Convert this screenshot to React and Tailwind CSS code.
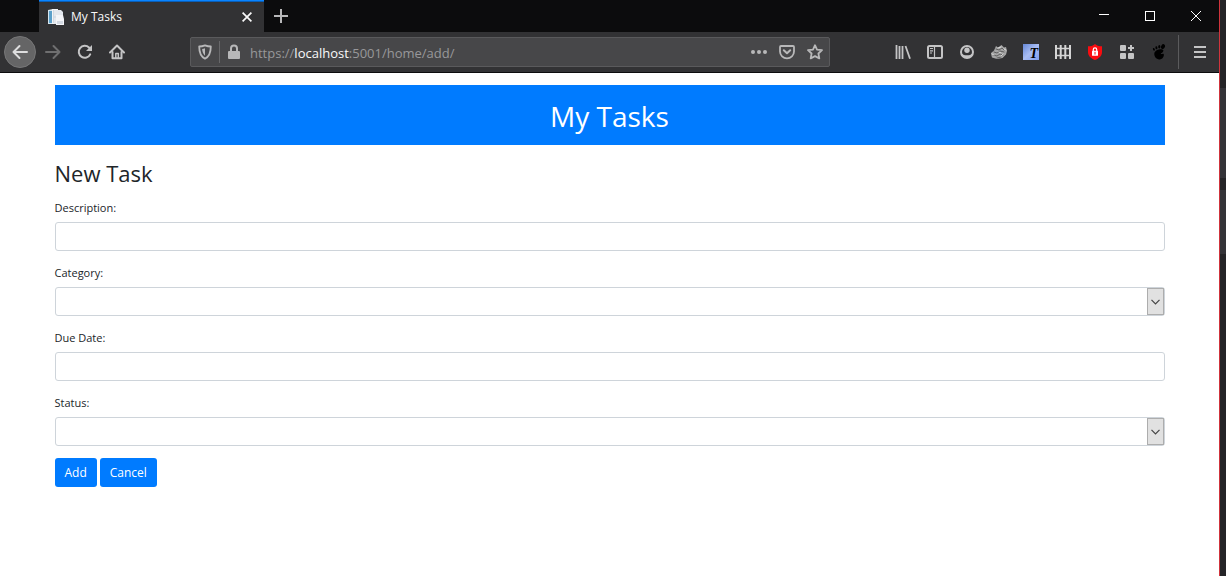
import React from "react";

function Svg({ children, size = 16, className = "" }) {
  return (
    <svg
      viewBox="0 0 16 16"
      width={size}
      height={size}
      fill="none"
      stroke="currentColor"
      strokeWidth="2"
      strokeLinecap="round"
      strokeLinejoin="round"
      className={className}
      aria-hidden="true"
    >
      {children}
    </svg>
  );
}

function ToolButton({ label, className = "w-8 text-[#c4c4c5]", children }) {
  return (
    <button
      type="button"
      aria-label={label}
      className={`flex h-8 shrink-0 items-center justify-center ${className}`}
    >
      {children}
    </button>
  );
}

function PagesIcon() {
  return (
    <svg viewBox="0 0 16 16" width="16" height="16" aria-hidden="true">
      <path d="M0 1l5-1v15H0z" fill="#d6e6f0" />
      <path d="M1 2h3v12H1z" fill="#5b9fc9" />
      <path d="M4 0h6v15H4z" fill="#f3f5f7" />
      <path d="M6 1h7l2 2v12H6z" fill="#e4e8ee" />
      <path d="M5.500 1v13M6 8h3" stroke="#c3ccd6" strokeWidth=".7" />
      <path d="M8 6h7l1 4v6H8z" fill="#f4f5f8" />
      <path d="M9 12h6v3H9z" fill="#d3d9e2" />
    </svg>
  );
}

function TitleBar() {
  return (
    <div className="flex h-8 bg-[#0c0c0d]">
      <div className="ml-[39px] flex w-[225px] items-center border-t border-[#0a84ff] bg-[#323234] pr-[7px] pl-[9px] text-[#f9f9fa] shadow-[inset_0_1px_0_#0a5fb8]">
        <PagesIcon />
        <span className="ml-[7px] flex-1 text-[12px] leading-4">My Tasks</span>
        <button type="button" aria-label="Close tab" className="flex size-5 items-center justify-center">
          <svg viewBox="0 0 10 10" width="10" height="10" fill="none" stroke="currentColor" strokeWidth="1.7" aria-hidden="true">
            <path d="M.6.6l8.8 8.8M9.4.6L.6 9.4" />
          </svg>
        </button>
      </div>
      <button type="button" aria-label="New tab" className="flex w-[34px] items-center justify-center text-[#b8b8b9]">
        <svg viewBox="0 0 14 14" width="14" height="14" fill="none" stroke="currentColor" strokeWidth="2" aria-hidden="true">
          <path d="M7 0v14M0 7h14" />
        </svg>
      </button>
      <div className="flex-1" />
      <button type="button" aria-label="Minimize" className="flex w-[46px] items-center justify-center text-white">
        <svg viewBox="0 0 10 10" width="10" height="10" stroke="currentColor" shapeRendering="crispEdges" aria-hidden="true">
          <path d="M0 3.500h10" />
        </svg>
      </button>
      <button type="button" aria-label="Maximize" className="flex w-[46px] items-center justify-center text-white">
        <svg viewBox="0 0 10 10" width="10" height="10" fill="none" stroke="currentColor" shapeRendering="crispEdges" aria-hidden="true">
          <path d="M.5.5h9v9h-9z" />
        </svg>
      </button>
      <button type="button" aria-label="Close window" className="flex w-[46px] items-center justify-center text-white">
        <svg viewBox="0 0 10 10" width="10" height="10" fill="none" stroke="currentColor" aria-hidden="true">
          <path d="M0 0l10 10M10 0L0 10" />
        </svg>
      </button>
    </div>
  );
}

function AddressBar() {
  return (
    <div className="flex h-[30px] flex-1 items-center rounded-xs border border-[#5a5a5c] bg-[#474749] text-[#b8b8b9]">
      <ToolButton label="Tracking protection" className="w-7">
        <Svg>
          <path d="M8 1.3c2 .8 4 1.200 5.800 1.200 0 5.500-1.400 10-5.800 12.200C3.600 12.500 2.200 8 2.200 2.500 4 2.500 6 2.100 8 1.300z" strokeWidth="1.800" />
          <path d="M8 4.300v7.400C6.200 10.200 5.300 7.800 5.100 5.100 6.100 5 7.100 4.700 8 4.300z" fill="currentColor" stroke="none" />
        </Svg>
      </ToolButton>
      <div className="h-[22px] w-px bg-[#68686a]" />
      <ToolButton label="Site information" className="w-7">
        <Svg>
          <path d="M5 8V4.500a3 3 0 0 1 6 0V8" />
          <rect x="2" y="7" width="12" height="8" rx="1" fill="currentColor" stroke="none" />
        </Svg>
      </ToolButton>
      <div className="flex-1 pt-0.5 pl-0.5 text-[13px] leading-5 text-[#98989a]">
        https://<span className="text-[#f9f9fa]">localhost</span>:5001/home/add/
      </div>
      <ToolButton label="Page actions" className="w-7">
        <Svg>
          <g fill="currentColor" stroke="none">
            <circle cx="2" cy="8" r="2" />
            <circle cx="8" cy="8" r="2" />
            <circle cx="14" cy="8" r="2" />
          </g>
        </Svg>
      </ToolButton>
      <ToolButton label="Save to Pocket" className="w-7">
        <Svg>
          <path d="M2 2h12a1 1 0 0 1 1 1v4.500a7 6.800 0 0 1-14 0V3a1 1 0 0 1 1-1z" strokeWidth="1.800" />
          <path d="M4.800 6.300L8 9.300l3.200-3" />
        </Svg>
      </ToolButton>
      <ToolButton label="Bookmark" className="w-7">
        <Svg>
          <path d="M8 1.200l2 4.400 5 .6-3.600 3.300.9 4.900L8 12.100l-4.300 2.300.9-4.900L1 6.200l5-.6z" strokeWidth="1.800" />
        </Svg>
      </ToolButton>
    </div>
  );
}

function Toolbar() {
  return (
    <div className="flex h-[41px] items-center border-b border-[#0c0c0d] bg-[#323234] pl-1">
      <ToolButton label="Back" className="w-8 rounded-full border border-[#777778] bg-[#656566] text-[#dededf]">
        <Svg>
          <path d="M15 8H1.500M7.500 2l-6 6 6 6" />
        </Svg>
      </ToolButton>
      <ToolButton label="Forward" className="w-[33px] text-[#6f6f70]">
        <Svg>
          <path d="M1 8h13.500M8.500 2l6 6-6 6" />
        </Svg>
      </ToolButton>
      <ToolButton label="Reload">
        <Svg>
          <path d="M13.200 10.300A6 6 0 1 1 12 3.500L13.500 5" />
          <path d="M15 1v6H9z" fill="currentColor" stroke="none" />
        </Svg>
      </ToolButton>
      <ToolButton label="Home">
        <Svg>
          <path d="M1 8.500L8 1.500l7 7" />
          <path d="M3.500 8v6.200h9V8" />
          <path d="M6.800 14V9.500h2.500V14" strokeWidth="1.500" />
        </Svg>
      </ToolButton>
      <div className="w-[57px]" />
      <AddressBar />
      <div className="w-[57px]" />
      <ToolButton label="Library">
        <Svg>
          <path d="M1.500 1v14M4.500 2v13M7.500 2v13M10.500 2l4.500 12.700" strokeWidth="1.800" strokeLinecap="butt" />
        </Svg>
      </ToolButton>
      <ToolButton label="Sidebars">
        <Svg>
          <rect x="1" y="2" width="14" height="12" rx="1.500" />
          <path d="M7.500 2v12M3 4.500h3M3 6.800h3M3 9h2" strokeWidth="1.200" strokeLinecap="butt" />
        </Svg>
      </ToolButton>
      <ToolButton label="Account">
        <Svg>
          <circle cx="8" cy="8" r="6" />
          <circle cx="8" cy="6.200" r="2.700" fill="currentColor" stroke="none" />
          <path d="M2.500 9.500c1.700 1.300 3 1.800 5.500 1.800s3.800-.5 5.500-1.800L12 13H4z" fill="currentColor" stroke="none" />
        </Svg>
      </ToolButton>
      <ToolButton label="Fox extension">
        <Svg>
          <path d="M0 9l3-2.500L5 2l2 1.500L10.500 1l2.500 2.500 2-.5 1 4-1 3.500L11.500 14 6 15l-5-1.500L.3 11z" fill="#a5a5a5" stroke="none" />
          <path d="M5 5l3 1 3-2 2 2M3 8l3 1 3-2 4 1M2 11l4 1 3-2 3 1M6 14l4-1" stroke="#4c4c4d" strokeWidth=".8" />
          <path d="M8 8l2 1M1 10l2 1M7 4l3-1M10 12l2-2M13 5l2 1" stroke="#dedede" strokeWidth=".9" />
        </Svg>
      </ToolButton>
      <ToolButton label="Text extension">
        <span className="flex size-4 items-end justify-end bg-linear-to-br from-[#6688d8] via-[#a9bdf3] to-[#7e9df0] pr-px font-['Liberation_Serif',serif] text-[14px] leading-3 font-bold text-black italic">
          T
        </span>
      </ToolButton>
      <ToolButton label="Containers" className="w-8 text-[#d4d4d4]">
        <Svg>
          <path d="M1 1v14M5.700 1v14M10.300 1v14M15 1v14" strokeLinecap="butt" />
          <path d="M0 4.500h16M0 11.500h16" strokeWidth="1.300" strokeLinecap="butt" />
        </Svg>
      </ToolButton>
      <ToolButton label="Secure shield">
        <Svg>
          <path d="M8 0l1 .7c1.500 1 3.500 1.500 6 1.600V8c0 4-3 6.500-7 8-4-1.500-7-4-7-8V2.300C3.500 2.200 5.500 1.700 7 .7z" fill="#fa0c10" stroke="none" />
          <path d="M6.300 7V5.500a1.700 1.700 0 0 1 3.400 0V7" stroke="#fff" strokeWidth="1.200" />
          <rect x="5" y="6.700" width="6" height="5" rx=".5" fill="#fff" stroke="none" />
          <path d="M8 8.200v2" stroke="#fa0c10" strokeWidth="1" />
        </Svg>
      </ToolButton>
      <ToolButton label="Add-ons">
        <Svg>
          <g fill="currentColor" stroke="none">
            <rect x="1" y="1" width="6" height="6" rx="1" />
            <rect x="1" y="9" width="6" height="6" rx="1" />
            <rect x="9" y="9" width="6" height="6" rx="1" />
          </g>
          <path d="M12 1v6M9 4h6" strokeLinecap="butt" />
        </Svg>
      </ToolButton>
      <ToolButton label="Foot extension" className="w-8 text-black">
        <Svg>
          <g fill="currentColor" stroke="none">
            <ellipse cx="12" cy="2.600" rx="1.900" ry="2.500" transform="rotate(22 12 2.600)" />
            <ellipse cx="8.300" cy="2.700" rx="1.100" ry="1.700" />
            <ellipse cx="5.400" cy="3.700" rx="1" ry="1.500" transform="rotate(-12 5.400 3.700)" />
            <ellipse cx="2.900" cy="5.300" rx=".9" ry="1.400" transform="rotate(-25 2.900 5.300)" />
            <path d="M10.500 5.300c2.800.2 2.200 2.700.2 3.600-.9.400-1.200 1-.5 1.100.9.100 1.300-.5 2.100-.2 1.300.5.500 5.200-3.400 5.600C5.300 15.800 3 12.500 3.300 9.600 3.600 6.700 7.300 5.200 10.500 5.300z" />
          </g>
        </Svg>
      </ToolButton>
      <div className="ml-[3px] h-[34px] w-px bg-[#5b5b5d]" />
      <ToolButton label="Open menu" className="w-10 pl-0.5 text-[#c4c4c5]">
        <Svg>
          <path d="M2 3h12M2 8h12M2 13h12" strokeLinecap="butt" />
        </Svg>
      </ToolButton>
    </div>
  );
}

const control =
  "block h-[29px] w-full appearance-none rounded-[3px] border border-[#ced4da] bg-white px-2 text-[12px] text-[#495057] outline-none";

function Field({ id, label, select = false }) {
  return (
    <div className="mb-3">
      <label htmlFor={id} className="mb-1 block w-fit text-[11px] leading-5">
        {label}
      </label>
      {select ? (
        <div className="relative">
          <select id={id} className={control} defaultValue="">
            <option value="" />
          </select>
          <span className="pointer-events-none absolute inset-y-px right-px flex w-[17px] items-center justify-center border border-[#adadad] bg-[#e1e1e1] text-[#444]">
            <svg viewBox="0 0 9 6" width="9" height="6" fill="none" stroke="currentColor" strokeWidth="1.200" aria-hidden="true">
              <path d="M.5.800l4 4 4-4" />
            </svg>
          </span>
        </div>
      ) : (
        <input id={id} type="text" className={control} />
      )}
    </div>
  );
}

function TaskPage() {
  return (
    <main className="flex-1 bg-white px-4 pt-3 text-[#212529]">
      <div className="mx-auto max-w-[1110px]">
        <header className="bg-[#007bff] pt-[13px] pb-[11px] text-center text-white">
          <h1 className="text-[28px] leading-9">My Tasks</h1>
        </header>
        <h2 className="mt-3 mb-[9px] text-[22px] leading-8">New Task</h2>
        <form onSubmit={(event) => event.preventDefault()}>
          <Field id="description" label="Description:" />
          <Field id="category" label="Category:" select />
          <Field id="due-date" label="Due Date:" />
          <Field id="status" label="Status:" select />
          <div className="flex gap-[3px]">
            <button type="submit" className="h-[29px] rounded-[3px] bg-[#007bff] px-2.5 text-[12px] text-white">
              Add
            </button>
            <a href="#home" className="flex h-[29px] items-center rounded-[3px] bg-[#007bff] px-2.5 text-[12px] text-white">
              Cancel
            </a>
          </div>
        </form>
      </div>
    </main>
  );
}

export default function App() {
  return (
    <div className="flex min-h-screen font-['Open_Sans','Noto_Sans',sans-serif]">
      <div className="flex min-w-0 flex-1 flex-col">
        <TitleBar />
        <Toolbar />
        <TaskPage />
      </div>
      <div className="flex w-[7px] flex-col border-l border-[#d0343c] bg-[#242427]">
        <div className="mt-[88px] h-[90px] bg-[#333338]" />
        <div className="mt-3 h-16 bg-[#333338]" />
      </div>
    </div>
  );
}
